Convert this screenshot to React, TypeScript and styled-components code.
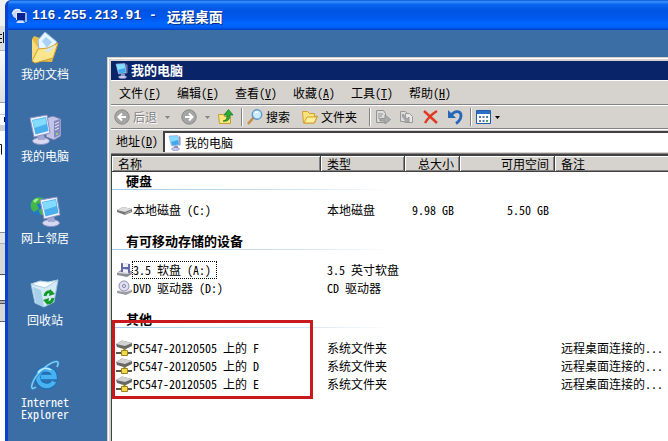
import React from "react";
import styled, { createGlobalStyle } from "styled-components";

const Global = createGlobalStyle`
  * { box-sizing: border-box; }
  html, body { margin: 0; overflow: hidden; background: #fff; }
  body, button, input, table {
    font: 12px/16px "Noto Sans Mono CJK SC", "Noto Sans CJK SC", monospace;
    color: #000;
  }
`;

const Screen = styled.div`
  display: grid;
  grid-template-columns: 5px minmax(0, 1fr);
  height: 100vh;
  overflow: hidden;
`;

const Behind = styled.div`
  display: grid;
  grid-template-rows: 26px 25px 52px 12px 10px 6px 36px 66px 11px 31px 26px 3px 18px 1fr;
  overflow: hidden;
  background: #fff;
`;

const Slice = styled.div<{ $fill: string; $edge?: string }>`
  display: flex;
  align-items: center;
  justify-content: flex-end;
  min-width: 0;
  overflow: hidden;
  background: ${(p) => p.$fill};
  border-bottom: 1px solid ${(p) => p.$edge ?? "transparent"};
`;

const Remote = styled.section`
  display: flex;
  flex-direction: column;
  min-width: 0;
  height: 100vh;
  border-left: 3px solid #0a42cf;
  border-radius: 6px 0 0 0;
  overflow: hidden;
  background: #3a6ea5;
`;

const RemoteTitle = styled.header`
  display: flex;
  flex: none;
  align-items: center;
  gap: 4px;
  height: 30px;
  margin-left: -3px;
  padding: 1px 0 0 5px;
  background: linear-gradient(#0a56d8 0, #3a94ff 6%, #0a66ee 14%, #0054e3 35%, #0058ee 60%, #0066ff 78%, #0062fa 90%, #0040c0 100%);
  color: #fff;
  text-shadow: 1px 1px 0 #0a2f80;
`;

const RemoteName = styled.h1`
  display: flex;
  gap: 10px;
  margin: 0;
  font: bold 14px/18px "Noto Sans CJK SC", sans-serif;
`;

const Address = styled.span`
  font: bold 13px/18px "Liberation Mono", monospace;
`;

const Desktop = styled.main`
  display: grid;
  grid-template-columns: 99px minmax(0, 1fr);
  flex: 1;
  min-height: 0;
`;

const Shortcuts = styled.nav`
  display: grid;
  grid-auto-rows: 82px;
  align-content: start;
  width: 74px;
  padding-top: 2px;
`;

const Shortcut = styled.button`
  display: flex;
  flex-direction: column;
  align-items: center;
  gap: 4px;
  padding: 0;
  border: 0;
  background: none;
  color: #fff;
  line-height: 12px;
`;

const Explorer = styled.section`
  display: flex;
  flex-direction: column;
  min-width: 0;
  margin-top: 27px;
  border: 1px solid #d4d0c8;
  border-width: 1px 0 0 1px;
  box-shadow: inset 1px 1px 0 #fff;
  padding: 3px 0 0 3px;
  background: #d6d3ce;
`;

const ExplorerTitle = styled.header`
  display: flex;
  flex: none;
  align-items: center;
  gap: 1px;
  height: 19px;
  padding-left: 3px;
  background: #0a246a;
  color: #fff;

  h2 { margin: 0; padding-bottom: 2px; font: bold 13px/16px "Noto Sans CJK SC", sans-serif; }
`;

const Bar = styled.div<{ $height: number; $inset?: number }>`
  display: flex;
  flex: none;
  align-items: center;
  height: ${(p) => p.$height}px;
  padding-left: ${(p) => p.$inset ?? 0}px;
  border-top: 1px solid #fff;
  border-bottom: 1px solid #848284;
`;

const MenuButton = styled.button`
  width: 58px;
  padding: 0 0 0 8px;
  border: 0;
  background: none;
  text-align: left;
  white-space: nowrap;
`;

const Tool = styled.button<{ $width: number }>`
  display: flex;
  flex: none;
  align-items: center;
  gap: 3px;
  width: ${(p) => p.$width}px;
  padding: 0;
  border: 0;
  background: none;
  white-space: nowrap;

  &:disabled { color: #848284; text-shadow: 1px 1px 0 #fff; }
  svg { flex: none; }
`;

const CaretMark = styled.svg<{ $apart?: boolean }>`
  margin-left: ${(p) => (p.$apart ? 5 : 0)}px;
`;

const Divider = styled.i`
  flex: none;
  width: 2px;
  height: 18px;
  margin-right: 4px;
  border-left: 1px solid #848284;
  border-right: 1px solid #fff;
`;

const AddressField = styled.div`
  display: flex;
  flex: 1;
  align-items: center;
  gap: 2px;
  height: 21px;
  padding-left: 2px;
  border: 2px solid #424142;
  border-width: 2px 0 0 2px;
  background: #fff;

  input { flex: 1; min-width: 0; padding: 0; border: 0; outline: 0; background: none; }
`;

const AddressLabel = styled.label`
  width: 52px;
  padding: 0 0 2px 5px;
  white-space: nowrap;
`;

const ListPane = styled.div`
  position: relative;
  flex: 1;
  min-height: 0;
  overflow: hidden;
  border-top: 2px solid #424142;
  border-left: 1px solid #424142;
  background: #fff;
`;

const Files = styled.table`
  width: 100%;
  table-layout: fixed;
  border-collapse: separate;
  border-spacing: 0;

  th, td { padding: 0 0 0 6px; text-align: left; white-space: nowrap; overflow: hidden; }
  td { height: 18px; }
`;

const HeadCell = styled.th<{ $end?: boolean }>`
  height: 16px;
  border: 1px solid #424142;
  border-width: 0 1px 1px 0;
  background: #d6d3ce;
  box-shadow: inset 1px 1px 0 #fff, inset -1px -1px 0 #848284;
  font-weight: normal;
  line-height: 15px;

  &&& {
    padding-right: ${(p) => (p.$end ? 5 : 0)}px;
    text-align: ${(p) => (p.$end ? "right" : "left")};
  }
  &:last-child { border-right: 0; box-shadow: inset 1px 1px 0 #fff, inset 0 -1px 0 #848284; }
`;

const SizeCell = styled.td`
  &&& { padding-right: 6px; text-align: right; }
`;

const GroupCell = styled.td<{ $first?: boolean }>`
  &&& {
    height: ${(p) => (p.$first ? 29 : 42)}px;
    padding: 0 0 11px;
    vertical-align: bottom;
  }
`;

const GroupName = styled.div`
  padding-left: 14px;
  border-bottom: 1px solid;
  border-image: linear-gradient(90deg, #a5c8e4, #cfe3f2 180px, #fff 280px) 1;
  font: bold 13px/16px "Noto Sans CJK SC", sans-serif;
`;

const NameCell = styled.div`
  display: flex;
  align-items: center;
  height: 18px;
  margin-left: -2px;
`;

const FileName = styled.span<{ $focused?: boolean }>`
  height: 16px;
  padding-right: 5px;
  outline: ${(p) => (p.$focused ? "1px dotted #000" : "0")};
`;

const Highlight = styled.div`
  position: absolute;
  top: 164px;
  left: 0;
  width: 201px;
  height: 79px;
  border: 3px solid #c8191e;
  pointer-events: none;
`;

const Strokes = ({ d }: { d: string }) => (
  <svg width="5" height="14" viewBox="0 0 5 14"><path d={d} fill="none" stroke="#111" /></svg>
);

const Monitor = () => (
  <svg width="16" height="16" viewBox="0 0 16 16">
    <path d="M2 1l9-.5L12.500 10 4.500 11z" fill="#e4e8fa" stroke="#8a94c0" strokeWidth=".6" />
    <path d="M2.500 1.500l8-.5 1.500 8.500-7 1z" fill="#3fa8ea" />
    <path d="M2.500 1.500l8-.5.7 4L3.500 7z" fill="#86dcff" />
    <path d="M12 1l1.500 1v8l-1 .5z" fill="#7c83b8" />
    <path d="M7 11h4v2H7z" fill="#8b92c4" />
    <ellipse cx="8.500" cy="14" rx="4" ry="1.500" fill="#c9cdee" stroke="#7a80b4" strokeWidth=".6" />
  </svg>
);

const RemoteIcon = () => (
  <svg width="18" height="16" viewBox="0 0 18 16">
    <circle cx="7" cy="5.500" r="4.800" fill="#c7d7f1" />
    <path d="M2 6c2-4 5-5 8-4" stroke="#fff" fill="none" />
    <path d="M6 4h9v8H6z" fill="#dfe8ff" />
    <path d="M7 5h8v7H7z" fill="#052292" />
    <path d="M15 4l2 1v9h-2z" fill="#9db2df" />
    <path d="M8 12.500h5l2 2.500H6z" fill="#d7def3" />
  </svg>
);

const Documents = () => (
  <svg width="32" height="32" viewBox="0 0 32 32">
    <path d="M3 7l2-3 6 2 15 3 3 3-6 18L3 29z" fill="#e9bd45" />
    <path d="M9 8l7-8 12 10-8 11-10-3z" fill="#e9f6ff" stroke="#8fb8df" />
    <path d="M13 9l4-4 6 5-5 6z" fill="#a6d2f6" />
    <path d="M3 7l7 10-7 12z" fill="#f7dc7c" />
    <path d="M3 29l6-12 10-1 10-5-5 15-18 5z" fill="#fbe58d" stroke="#d29f2c" />
    <path d="M16 18l11-5-8 8z" fill="#cfe8f8" />
  </svg>
);

const BigScreen = ({ x, y }: { x: number; y: number }) => (
  <g transform={`translate(${x} ${y})`}>
    <ellipse cx="11" cy="26" rx="8.500" ry="3.500" fill="#d8d9f1" stroke="#8c8fc0" />
    <path d="M7 19h7l1 6H8z" fill="#a4a8d4" />
    <path d="M0 3l17-3 3 18-16 4z" fill="#f0f2ff" stroke="#8a90bf" />
    <path d="M2 5l14-3 2.500 14-13 3.500z" fill="#49afed" />
    <path d="M2.500 5.500l13-2.500 1 6-12 4z" fill="#83dcff" />
  </g>
);

const Computer = () => (
  <svg width="32" height="32" viewBox="0 0 32 32">
    <path d="M17 4l7-2 8 3v17l-7 4-8-3z" fill="#c3c5e8" stroke="#7479ad" />
    <path d="M25 7l6-2v16l-6 3z" fill="#8589bd" />
    <path d="M26 10l4-2M26 13l4-2M26 16l4-2" stroke="#eceeff" />
    <circle cx="28" cy="20" r="1" fill="#8ff05c" />
    <BigScreen x={1} y={1} />
  </svg>
);

const Network = () => (
  <svg width="32" height="32" viewBox="0 0 32 32">
    <circle cx="10" cy="10" r="9" fill="#2477d0" />
    <path d="M3 5c4-5 10-4 12-2l-3 4-4 1 2 5-5 3C1 13 1 8 3 5zM10 14l5-3v8c-3 1-5-2-5-5z" fill="#43b649" />
    <path d="M4 5c2-3 5-3 6-2L6 7z" fill="#a6ee8a" />
    <BigScreen x={11} y={1} />
  </svg>
);

const Recycle = () => (
  <svg width="32" height="32" viewBox="0 0 32 32">
    <path d="M2 6l11 2 16-6-4 22-10 5-9-4z" fill="#d5eaf7" stroke="#9cc3dc" />
    <path d="M2 6l9-3 8 1 10-2-13 8z" fill="#f7fcff" stroke="#aacde2" />
    <path d="M4 9l8 3 3 17-8-4z" fill="#a9d0ea" />
    <g fill="none" stroke="#159a29" strokeWidth="3">
      <path d="M16 18c1-5 5-5 7-3M24 20c-1 5-5 6-7 3" />
    </g>
    <path d="M21 11l5 5-6 2zM20 20l-6 2 5 5z" fill="#159a29" />
  </svg>
);

const InternetExplorer = () => (
  <svg width="32" height="32" viewBox="0 0 32 32">
    <path d="M25 21.500c-3 7-16 6-16-4.500s16-10 16.500 0H12" fill="none" stroke="#1470bd" strokeWidth="6.500" />
    <path d="M25 21.500c-3 7-16 6-16-4.500s16-10 16.500 0H12" fill="none" stroke="#48b1f0" strokeWidth="4.500" />
    <path d="M7 27c-8 6-4-8 5-16C21 2 33-3 28 7" fill="none" stroke="#2a82c4" strokeWidth="3" />
    <path d="M7 27c-8 6-4-8 5-16C21 2 33-3 28 7" fill="none" stroke="#84cdf4" strokeWidth="1.500" />
    <path d="M9 13c3-5 9-6 13-3" fill="none" stroke="#b8edff" strokeWidth="1.500" />
  </svg>
);

const Arrow = ({ forward }: { forward?: boolean }) => (
  <svg width="16" height="16" viewBox="0 0 16 16">
    <circle cx="8" cy="8" r="7.200" fill="#a5a5a5" stroke="#8b8b8b" />
    <path
      d={forward ? "M4 8h7M8 4.500L11.500 8 8 11.500" : "M12 8H5M8 4.500L4.500 8 8 11.500"}
      fill="none" stroke="#fff" strokeWidth="2"
    />
  </svg>
);

const Caret = ({ fill = "#848284", apart }: { fill?: string; apart?: boolean }) => (
  <CaretMark $apart={apart} width="5" height="3" viewBox="0 0 5 3"><path d="M0 0h5L2.500 3z" fill={fill} /></CaretMark>
);

const Folder = () => (
  <svg width="16" height="16" viewBox="0 0 16 16">
    <path d="M.5 2.500h5l2 2h5v3l3-.5-3 7h-11z" fill="#fbe27c" stroke="#d1a02b" />
    <path d="M2 14l3-6h10l-3 6z" fill="#fff0a0" stroke="#d1a02b" />
  </svg>
);

const Up = () => (
  <svg width="16" height="16" viewBox="0 0 16 16">
    <path d="M.5 5.500h5l1 2h6v7h-11z" fill="#fae57c" stroke="#c7a12e" />
    <path d="M5 12c4-1 4-3 4-6H6l4.500-5.500L15 6h-3c0 4-2 7-7 6z" fill="#2cab32" stroke="#117519" strokeWidth=".7" />
  </svg>
);

const Search = () => (
  <svg width="16" height="16" viewBox="0 0 16 16">
    <path d="M1 15l6-7" stroke="#c78d45" strokeWidth="2.500" />
    <circle cx="10" cy="5.500" r="4.700" fill="#c9edff" stroke="#6096cd" strokeWidth="1.400" />
    <path d="M8 4c1-1 2-1 3-1" stroke="#fff" strokeWidth="1.500" fill="none" />
  </svg>
);

const MoveTo = () => (
  <svg width="16" height="16" viewBox="0 0 16 16" stroke="#939393" fill="#dcdcdc">
    <path d="M1.500 1.500h7l2 3v9h-9z" />
    <path d="M3 5h5M3 7h4M3 9h2" />
    <path d="M5 9.500h5V6l5.500 4.500L10 15v-3H5z" fill="#ababab" />
  </svg>
);

const CopyTo = () => (
  <svg width="16" height="16" viewBox="0 0 16 16" stroke="#999" fill="#dcdcdc">
    <path d="M1.500 2.500h5l2 2v8h-7z" />
    <path d="M6.500 4.500h4l3 3v6h-7z" fill="#e8e8e8" />
    <path d="M4 5l4 5 2-2v5H5l1.500-1.500L3 7z" fill="#ababab" />
  </svg>
);

const Delete = () => (
  <svg width="16" height="16" viewBox="0 0 16 16">
    <path d="M1 2l13 12M14 2C9 5 5 9 2 14" stroke="#df3a20" strokeWidth="2.400" fill="none" />
  </svg>
);

const Undo = () => (
  <svg width="16" height="16" viewBox="0 0 16 16">
    <path d="M4 6.500c4-6 10-4.500 10 0 0 4-2 6-5 8" fill="none" stroke="#2568ba" strokeWidth="2.800" />
    <path d="M1 1v8h8z" fill="#2568ba" />
  </svg>
);

const Views = () => (
  <svg width="16" height="16" viewBox="0 0 16 16">
    <path d="M.5 1.500h14v13H.5z" fill="#fff" stroke="#205da9" />
    <path d="M1 2h13v3H1z" fill="#2b70c5" />
    <path d="M3 7h2v2H3zM10 7h2v2h-2zM6.500 11h2v2h-2z" fill="#3b80bd" />
    <path d="M6.500 7h2v2h-2zM3 11h2v2H3z" fill="#7e719a" />
    <path d="M10 11h2v2h-2z" fill="#4fa061" />
  </svg>
);

type DriveKind = "disk" | "floppy" | "dvd" | "share";

const drivePaths: Record<DriveKind, React.ReactNode> = {
  disk: (
    <>
      <path d="M1 8l6-3 9 2v3l-7 3-8-3z" fill="#777" />
      <path d="M1 8l6-3 9 2-7 3z" fill="#dedede" />
      <path d="M9 12l6-3" stroke="#bbb" />
    </>
  ),
  floppy: (
    <>
      <path d="M1 11l4-3 11 1v3l-5 3-10-2z" fill="#8c8c94" />
      <path d="M1 11l5-2 10 1-5 2z" fill="#ddd" />
      <path d="M5 1l9 1v9l-9-1z" fill="#6468a8" />
      <path d="M7 1l5 .6v3.500L7 5zM7 7l5 .5V11l-5-.5z" fill="#f0f0fa" />
    </>
  ),
  dvd: (
    <>
      <path d="M1 11l5-2 10 1v2l-6 3-9-2z" fill="#9b9ba3" />
      <path d="M1 11l5-2 10 1-6 2z" fill="#e8e8ec" />
      <circle cx="8" cy="6" r="5" fill="#dfdff2" stroke="#9191ae" />
      <circle cx="8" cy="6" r="1.500" fill="#fff" stroke="#7a7a99" />
    </>
  ),
  share: (
    <>
      <path d="M0 4l6-3.500L16 3v3L9 9.500 1 7z" fill="#686868" />
      <path d="M0 4l6-3.500L16 3 9 6z" fill="#d2d2d2" />
      <path d="M0 13h16" stroke="#55554a" strokeWidth="2" />
      <path d="M8.500 8v3" stroke="#8c7a22" strokeWidth="2" />
      <path d="M5.500 10.500h6v5h-6z" fill="#f3da4b" stroke="#9d8420" />
    </>
  ),
};

const Drive = ({ kind }: { kind: DriveKind }) => (
  <svg width="17" height="16" viewBox="0 0 17 16">{drivePaths[kind]}</svg>
);

const menus = [["文件", "F"], ["编辑", "E"], ["查看", "V"], ["收藏", "A"], ["工具", "T"], ["帮助", "H"]];

const shortcuts = [
  { label: "我的文档", icon: <Documents /> },
  { label: "我的电脑", icon: <Computer /> },
  { label: "网上邻居", icon: <Network /> },
  { label: "回收站", icon: <Recycle /> },
  { label: "Internet Explorer", icon: <InternetExplorer /> },
];

type Item = { name: string; type: string; kind: DriveKind; total?: string; free?: string; note?: string; focused?: boolean };

const shared = (letter: string): Item => ({
  name: `PC547-20120505 上的 ${letter}`, type: "系统文件夹", kind: "share", note: "远程桌面连接的...",
});

const groups: { title: string; items: Item[] }[] = [
  { title: "硬盘", items: [{ name: "本地磁盘 (C:)", type: "本地磁盘", kind: "disk", total: "9.98 GB", free: "5.50 GB" }] },
  {
    title: "有可移动存储的设备",
    items: [
      { name: "3.5 软盘 (A:)", type: "3.5 英寸软盘", kind: "floppy", focused: true },
      { name: "DVD 驱动器 (D:)", type: "CD 驱动器", kind: "dvd" },
    ],
  },
  { title: "其他", items: [shared("F"), shared("D"), shared("E")] },
];

export default function App() {
  return (
    <Screen>
      <Global />
      <Behind aria-hidden="true">
        <Slice $fill="#f1f0ee" />
        <Slice $fill="#dcdcdc" $edge="#b5b5b5"><Strokes d="M3.500 1v11M0 3.500h2M0 7.500h2M0 11.500h2" /></Slice>
        <Slice $fill="linear-gradient(#fafafa, #dedede)" $edge="#a0a0a0" />
        <Slice $fill="#fff" $edge="#c8c8c8" />
        <Slice $fill="#fff"><Strokes d="M4.500 4v5" /></Slice>
        <Slice $fill="#d0d0d0" />
        <Slice $fill="#fff"><Strokes d="M0 2.500h1.500v10" /></Slice>
        <Slice $fill="#fff" $edge="#8c8c8c" />
        <Slice $fill="#e4e4e4" $edge="#b0b0b0" />
        <Slice $fill="#d8d7d5" $edge="#505050" />
        <Slice $fill="#fff" $edge="#505050" />
        <Slice $fill="#b0b0b0" $edge="#505050" />
        <Slice $fill="#d8d7d5" $edge="#606060" />
        <Slice $fill="#fff" />
      </Behind>
      <Remote>
        <RemoteTitle>
          <RemoteIcon />
          <RemoteName><Address>116.255.213.91 -</Address>远程桌面</RemoteName>
        </RemoteTitle>
        <Desktop>
          <Shortcuts>
            {shortcuts.map((s) => (
              <Shortcut key={s.label}>{s.icon}<span>{s.label}</span></Shortcut>
            ))}
          </Shortcuts>
          <Explorer>
            <ExplorerTitle><Monitor /><h2>我的电脑</h2></ExplorerTitle>
            <Bar $height={25}>
              {menus.map(([label, key]) => (
                <MenuButton key={key}>{label}(<u>{key}</u>)</MenuButton>
              ))}
            </Bar>
            <Bar $height={24} $inset={3}>
              <Tool $width={67} disabled><Arrow />后退<Caret apart /></Tool>
              <Tool $width={37} disabled aria-label="前进"><Arrow forward /><Caret apart /></Tool>
              <Tool $width={23} aria-label="向上"><Up /></Tool>
              <Divider />
              <Tool $width={55}><Search />搜索</Tool>
              <Tool $width={67}><Folder />文件夹</Tool>
              <Divider />
              <Tool $width={24} disabled aria-label="移至"><MoveTo /></Tool>
              <Tool $width={24} disabled aria-label="复制到"><CopyTo /></Tool>
              <Tool $width={24} aria-label="删除"><Delete /></Tool>
              <Tool $width={23} aria-label="撤销"><Undo /></Tool>
              <Divider />
              <Tool $width={26} aria-label="查看"><Views /><Caret fill="#000" /></Tool>
            </Bar>
            <Bar $height={25}>
              <AddressLabel htmlFor="address">地址(<u>D</u>)</AddressLabel>
              <AddressField><Monitor /><input id="address" defaultValue="我的电脑" /></AddressField>
            </Bar>
            <ListPane>
              <Files>
                <colgroup>
                  <col width="209" /><col width="84" /><col width="55" /><col width="95" /><col />
                </colgroup>
                <thead>
                  <tr>
                    <HeadCell>名称</HeadCell>
                    <HeadCell>类型</HeadCell>
                    <HeadCell $end>总大小</HeadCell>
                    <HeadCell $end>可用空间</HeadCell>
                    <HeadCell>备注</HeadCell>
                  </tr>
                </thead>
                <tbody>
                  {groups.map((g, i) => (
                    <React.Fragment key={g.title}>
                      <tr><GroupCell colSpan={5} $first={i === 0}><GroupName>{g.title}</GroupName></GroupCell></tr>
                      {g.items.map((it) => (
                        <tr key={it.name}>
                          <td><NameCell><Drive kind={it.kind} /><FileName $focused={it.focused}>{it.name}</FileName></NameCell></td>
                          <td>{it.type}</td>
                          <SizeCell>{it.total}</SizeCell>
                          <SizeCell>{it.free}</SizeCell>
                          <td>{it.note}</td>
                        </tr>
                      ))}
                    </React.Fragment>
                  ))}
                </tbody>
              </Files>
              <Highlight />
            </ListPane>
          </Explorer>
        </Desktop>
      </Remote>
    </Screen>
  );
}
